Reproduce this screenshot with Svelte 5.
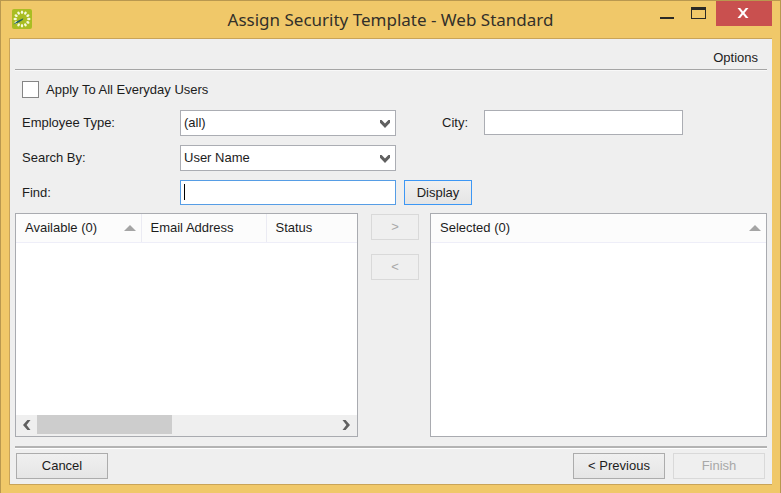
<script>
  let applyAll = $state(false);
  let employeeType = $state('(all)');
  let searchBy = $state('User Name');
  let city = $state('');
  let find = $state('');
  const petals = Array.from({ length: 12 }, (_, i) => i * 30);
</script>

{#snippet chevron()}
  <svg class="chevron" viewBox="0 0 10 8" width="10" height="8" aria-hidden="true">
    <path d="M0 0 H1.6 L5 3.4 L8.4 0 H10 V2.8 L5 8 L0 2.8 Z" fill="#606060" />
  </svg>
{/snippet}

{#snippet sortMark()}
  <svg class="sort" viewBox="0 0 12 6" width="12" height="6" aria-hidden="true">
    <path d="M6 0 L12 6 H0 Z" fill="#a5a5a5" />
  </svg>
{/snippet}

<div class="window">
  <header>
    <svg class="logo" viewBox="0 0 20 20" width="20" height="20" aria-hidden="true">
      <rect width="20" height="20" rx="2" fill="#a9bd22" />
      {#each petals as angle}
        <ellipse cx="10" cy="3.2" rx="1.2" ry="1.7" fill="#f6f9dc" transform="rotate({angle} 10 10)" />
      {/each}
      <path d="M1.2 15.6 L5.5 12 L11.4 9.2 L10.6 11 L6.5 13.6 Z" fill="#1c5d66" />
    </svg>
    <h1>Assign Security Template - Web Standard</h1>
    <div class="controls">
      <button class="min" aria-label="Minimize">
        <svg viewBox="0 0 15 13" width="15" height="13"><path d="M0 10 H14 V12 H0 Z" fill="#2b2a26" /></svg>
      </button>
      <button class="max" aria-label="Maximize">
        <svg viewBox="0 0 15 12" width="15" height="12"><path d="M0 0 H15 V12 H0 Z M1 3 V11 H14 V3 Z" fill="#2b2a26" fill-rule="evenodd" /></svg>
      </button>
      <button class="close" aria-label="Close">
        <svg viewBox="0 0 12 10" width="12" height="10"><path d="M0.5 0 H3.2 L6 3.4 L8.8 0 H11.5 L7.4 5 L11.5 10 H8.8 L6 6.6 L3.2 10 H0.5 L4.6 5 Z" fill="#fff" /></svg>
      </button>
    </div>
  </header>

  <main>
    <div class="options">Options</div>

    <label class="check"><input type="checkbox" bind:checked={applyAll} />Apply To All Everyday Users</label>

    <div class="form">
      <div class="row">
        <label class="name" for="type">Employee Type:</label>
        <div class="field">
          <select id="type" bind:value={employeeType}><option>(all)</option></select>
          {@render chevron()}
        </div>
        <label class="city-name" for="city">City:</label>
        <input class="city" id="city" type="text" bind:value={city} />
      </div>
      <div class="row">
        <label class="name" for="by">Search By:</label>
        <div class="field">
          <select id="by" bind:value={searchBy}><option>User Name</option></select>
          {@render chevron()}
        </div>
      </div>
      <div class="row">
        <label class="name" for="find">Find:</label>
        <div class="field">
          <input class="find" id="find" type="text" bind:value={find} />
          <span class="caret"></span>
        </div>
        <button class="btn display">Display</button>
      </div>
    </div>

    <div class="lists">
      <section class="list available">
        <table>
          <thead>
            <tr>
              <th class="wide"><div>Available (0){@render sortMark()}</div></th>
              <th class="wide"><div>Email Address</div></th>
              <th><div>Status</div></th>
            </tr>
          </thead>
        </table>
        <div class="scroll">
          <button aria-label="Scroll left">
            <svg viewBox="0 0 8 10" width="8" height="10"><path d="M7.5 0 L3.6 5 L7.5 10 H4.4 L0 5 L4.4 0 Z" fill="#606060" /></svg>
          </button>
          <div class="track"><div class="thumb"></div></div>
          <button aria-label="Scroll right">
            <svg viewBox="0 0 8 10" width="8" height="10"><path d="M0.5 0 L4.4 5 L0.5 10 H3.6 L8 5 L3.6 0 Z" fill="#606060" /></svg>
          </button>
        </div>
      </section>

      <div class="move">
        <button class="btn" disabled>&gt;</button>
        <button class="btn" disabled>&lt;</button>
      </div>

      <section class="list selected">
        <table>
          <thead>
            <tr><th><div>Selected (0){@render sortMark()}</div></th></tr>
          </thead>
        </table>
      </section>
    </div>

    <footer>
      <button class="btn">Cancel</button>
      <span class="space"></span>
      <button class="btn">&lt; Previous</button>
      <button class="btn" disabled>Finish</button>
    </footer>
  </main>
</div>

<style>
  .window,
  .window * {
    box-sizing: border-box;
  }

  .window {
    display: flex;
    flex-direction: column;
    min-height: 100vh;
    padding: 0 8px 8px;
    border: 1px solid #b9984f;
    border-bottom: 0;
    background: #f0c869;
    color: #1c1c1c;
    font: 13px/18px "Liberation Sans", Arial, sans-serif;
  }

  button,
  input,
  select {
    margin: 0;
    font: inherit;
    color: inherit;
    border-radius: 0;
    outline: 0;
  }

  header {
    position: relative;
    display: flex;
    justify-content: space-between;
    height: 37px;
  }

  .logo {
    margin: 8px 0 0 3px;
  }

  h1 {
    position: absolute;
    inset: 0;
    margin: 0;
    text-align: center;
    font: 17px/38px "Noto Sans", "Open Sans", sans-serif;
    color: #33302a;
    pointer-events: none;
  }

  .controls {
    display: flex;
    align-items: flex-start;
  }

  .controls button {
    display: flex;
    padding: 6px 0 0;
    border: 0;
    background: none;
  }

  .controls .min {
    width: 31px;
  }

  .controls .max {
    width: 25px;
  }

  .controls .close {
    width: 56px;
    height: 25px;
    padding: 0 2px 2px 0;
    align-items: center;
    justify-content: center;
    background: #c9504f;
  }

  main {
    flex: 1;
    display: flex;
    flex-direction: column;
    padding: 0 5px 5px;
    border: 1px solid #c9a458;
    border-right: 0;
    background: #efefef;
  }

  .options {
    height: 31px;
    padding: 10px 9px 0 0;
    text-align: right;
    border-bottom: 1px solid #a5a5a5;
    box-shadow: 0 1px #f8f8f8;
  }

  .check {
    display: flex;
    align-items: center;
    gap: 7px;
    margin: 11px 0 12px 7px;
    height: 17px;
  }

  .check input {
    appearance: none;
    width: 17px;
    height: 17px;
    border: 1px solid #858585;
    background: #fff;
  }

  .check input:checked {
    background: #505050;
    box-shadow: inset 0 0 0 3px #fff;
  }

  .form {
    display: flex;
    flex-direction: column;
    gap: 9px;
    padding-left: 7px;
  }

  .row {
    display: flex;
    height: 26px;
  }

  .name {
    width: 158px;
    line-height: 26px;
  }

  .field {
    position: relative;
    width: 216px;
  }

  select,
  input[type="text"] {
    width: 100%;
    height: 26px;
    padding: 0 3px;
    border: 1px solid #abadb3;
    background: #fff;
  }

  select {
    appearance: none;
  }

  .chevron {
    position: absolute;
    right: 6px;
    top: 10px;
  }

  .city-name {
    width: 42px;
    margin-left: 46px;
    line-height: 26px;
  }

  .row .city {
    width: 199px;
    height: 25px;
  }

  .row .find {
    height: 25px;
    border-color: #569de5;
  }

  .caret {
    position: absolute;
    left: 4px;
    top: 4px;
    width: 1px;
    height: 16px;
    background: #000;
  }

  .btn {
    width: 92px;
    height: 26px;
    padding: 0;
    border: 1px solid #acacac;
    background: linear-gradient(#f0f0f0, #e5e5e5);
  }

  .btn:disabled {
    border-color: #d9d9d9;
    background: #efefef;
    color: #a8a8a8;
  }

  .row .display {
    width: 68px;
    height: 25px;
    margin-left: 8px;
    border-color: #3c97f5;
  }

  .lists {
    flex: 1;
    display: flex;
    min-height: 120px;
    margin-top: 7px;
  }

  .list {
    display: flex;
    flex-direction: column;
    border: 1px solid #a9abb0;
    background: #fff;
  }

  .available {
    flex: 343;
  }

  .selected {
    flex: 337;
  }

  table {
    width: 100%;
    border-collapse: collapse;
    table-layout: fixed;
  }

  th {
    height: 28px;
    padding: 0 9px;
    text-align: left;
    font-weight: 400;
    background: #fcfcfc;
    border-bottom: 1px solid #eeeef8;
  }

  th + th {
    border-left: 1px solid #ebebf3;
  }

  .wide {
    width: 125px;
  }

  th div {
    display: flex;
    align-items: center;
    justify-content: space-between;
  }

  .sort {
    margin-right: -4px;
  }

  .scroll {
    display: flex;
    height: 21px;
    margin-top: auto;
    background: #efefef;
  }

  .scroll button {
    display: flex;
    align-items: center;
    justify-content: center;
    width: 21px;
    padding: 0 0 2px;
    border: 0;
    background: none;
  }

  .track {
    flex: 1;
  }

  .thumb {
    width: 45%;
    height: 19px;
    background: #cdcdcd;
  }

  .move {
    display: flex;
    flex-direction: column;
    gap: 14px;
    width: 72px;
    padding: 1px 11px 0 13px;
  }

  .move .btn {
    width: 48px;
  }

  footer {
    display: flex;
    gap: 8px;
    margin-top: 9px;
    padding: 5px 2px 0 1px;
    border-top: 2px solid #b3b3b3;
    box-shadow: inset 0 1px #fff;
  }

  .space {
    flex: 1;
  }
</style>
